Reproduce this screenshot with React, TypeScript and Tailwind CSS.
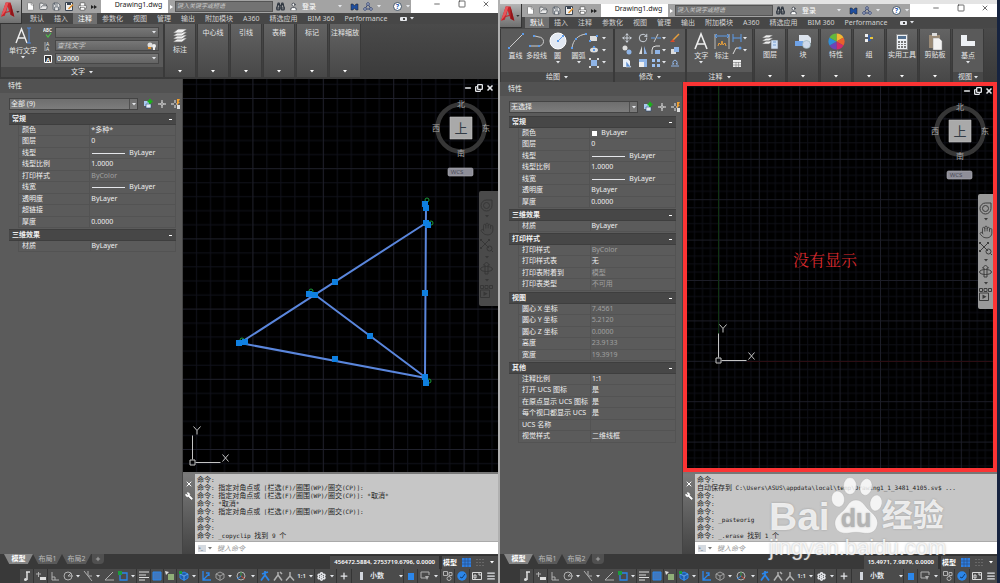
import { ReactNode } from 'react';
import {
  Binoculars,
  Calculator,
  Copy,
  File,
  FolderOpen,
  Hand,
  Menu,
  Minus,
  Move,
  Plus,
  Printer,
  RotateCw,
  Save,
  Settings,
  Square,
  User,
  Wrench,
  X,
} from 'lucide-react';

type Row = { label: string; value: string; muted?: boolean; line?: boolean; swatch?: boolean };
type Group = { title: string; rows: Row[] };

const leftGroups: Group[] = [
  {
    title: '常规',
    rows: [
      { label: '颜色', value: '*多种*' },
      { label: '图层', value: '0' },
      { label: '线型', value: 'ByLayer', line: true },
      { label: '线型比例', value: '1.0000' },
      { label: '打印样式', value: 'ByColor', muted: true },
      { label: '线宽', value: 'ByLayer', line: true },
      { label: '透明度', value: 'ByLayer' },
      { label: '超链接', value: '' },
      { label: '厚度', value: '0.0000' },
    ],
  },
  { title: '三维效果', rows: [{ label: '材质', value: 'ByLayer' }] },
];

const rightGroups: Group[] = [
  {
    title: '常规',
    rows: [
      { label: '颜色', value: 'ByLayer', swatch: true },
      { label: '图层', value: '0' },
      { label: '线型', value: 'ByLayer', line: true },
      { label: '线型比例', value: '1.0000' },
      { label: '线宽', value: 'ByLayer', line: true },
      { label: '透明度', value: 'ByLayer' },
      { label: '厚度', value: '0.0000' },
    ],
  },
  { title: '三维效果', rows: [{ label: '材质', value: 'ByLayer' }] },
  {
    title: '打印样式',
    rows: [
      { label: '打印样式', value: 'ByColor', muted: true },
      { label: '打印样式表', value: '无' },
      { label: '打印表附着到', value: '模型', muted: true },
      { label: '打印表类型', value: '不可用', muted: true },
    ],
  },
  {
    title: '视图',
    rows: [
      { label: '圆心 X 坐标', value: '7.4561', muted: true },
      { label: '圆心 Y 坐标', value: '5.2120', muted: true },
      { label: '圆心 Z 坐标', value: '0.0000', muted: true },
      { label: '高度', value: '23.9133', muted: true },
      { label: '宽度', value: '19.3919', muted: true },
    ],
  },
  {
    title: '其他',
    rows: [
      { label: '注释比例', value: '1:1' },
      { label: '打开 UCS 图标', value: '是' },
      { label: '在原点显示 UCS 图标', value: '是' },
      { label: '每个视口都显示 UCS', value: '是' },
      { label: 'UCS 名称', value: '' },
      { label: '视觉样式', value: '二维线框' },
    ],
  },
];

const leftLog = [
  '命令:',
  '命令: 指定对角点或 [栏选(F)/圈围(WP)/圈交(CP)]:',
  '命令: 指定对角点或 [栏选(F)/圈围(WP)/圈交(CP)]: *取消*',
  '命令: *取消*',
  '命令: 指定对角点或 [栏选(F)/圈围(WP)/圈交(CP)]:',
  '命令:',
  '命令:',
  '命令: _copyclip 找到 9 个',
];

const rightLog = [
  '命令:',
  '自动保存到 C:\\Users\\ASUS\\appdata\\local\\temp\\Drawing1_1_3481_4105.sv$ ...',
  '命令:',
  '命令:',
  '命令:',
  '命令: _pasteorig',
  '命令:',
  '命令: _.erase 找到 1 个',
];

const ribbonTabs = ['默认', '插入', '注释', '参数化', '视图', '管理', '输出', '附加模块', 'A360', '精选应用', 'BIM 360', 'Performance'];

function Caret({ className = 'text-gray-200' }: { className?: string }) {
  return (
    <svg viewBox="0 0 4 3" className={`h-[3px] w-1 shrink-0 ${className}`} aria-hidden="true">
      <path d="M0 0h4L2 2.6z" fill="currentColor" />
    </svg>
  );
}

/* ---------- title bar ---------- */

function Logo() {
  return (
    <button aria-label="应用程序菜单" className="flex w-[22px] shrink-0 items-center border-r border-b border-[#333] bg-linear-to-b from-[#b5b5b5] to-[#6f6f6f]">
      <svg viewBox="0 0 22 22" className="h-[22px] w-[22px]">
        <path d="M6 1h5l4 15-4-2-1-3-4 1-1 3-4 1z" fill="#c5262b" />
        <path d="M6 1h3l-3 9-5 6z" fill="#e8555a" />
        <path d="M8 5l1.500 5-3 .8z" fill="#8f8f8f" />
        <path d="M11 1l4 15-4-2z" fill="#8f1519" />
        <path d="M17 10h3.500L18.700 12z" fill="#333" />
      </svg>
    </button>
  );
}

function TitleBar({ activeTab, search }: { activeTab: string; search: string }) {
  return (
    <header className="flex h-6 shrink-0 bg-[#4a4a4a]">
      <Logo />
      <div className="flex min-w-0 flex-1 flex-col">
        <div className="flex h-[13px] items-stretch bg-[#a3a3a3]">
          <div className="flex w-[79px] shrink-0 items-center justify-between pr-1 pl-1 text-white">
            <button aria-label="新建"><File className="h-[9px] w-[9px] fill-white text-[#777]" /></button>
            <button aria-label="打开"><FolderOpen className="h-[9px] w-[9px] fill-[#e8e8e8] text-[#4d5358]" /></button>
            <button aria-label="保存"><Save className="h-[9px] w-[9px] fill-[#e8e8e8] text-[#3b4552]" /></button>
            <button aria-label="另存为">
              <svg viewBox="0 0 9 9" className="h-[9px] w-[9px]">
                <path d="M.5.500h7v8h-7z" fill="#eee" stroke="#3b4552" />
                <path d="M2 1h4v2H2z" fill="#3b4552" />
                <path d="M3.500 7L8 2.500" stroke="#e0902a" strokeWidth="1.500" />
              </svg>
            </button>
            <button aria-label="打印"><Printer className="h-[9px] w-[9px] fill-white text-[#555]" /></button>
            <button aria-label="更多">
              <svg viewBox="0 0 6 4" className="h-1 w-[6px]"><path d="M0 0l3 2-3 2zM3 0l3 2-3 2z" fill="#222" /></svg>
            </button>
          </div>
          <h1 className="flex w-[67px] shrink-0 items-start justify-center bg-white pl-2 text-[7px] leading-[9px] text-[#222]">Drawing1.dwg</h1>
          <button aria-label="展开搜索" className="flex w-[7px] shrink-0 items-center justify-center">
            <svg viewBox="0 0 3 4" className="h-1 w-[3px]"><path d="M0 0l3 2-3 2z" fill="#fff" /></svg>
          </button>
          <input
            id={search}
            aria-label="搜索"
            placeholder="键入关键字或短语"
            className="my-px w-[98px] min-w-0 border border-[#555] bg-[#737373] pl-px text-[6px] leading-[9px] text-white italic placeholder:text-[#c9c9c9]"
          />
          <div className="flex flex-1 items-center gap-1 pl-[3px] text-[#2f3640]">
            <Binoculars className="h-[9px] w-[9px]" strokeWidth={3} />
            <User className="h-[9px] w-[9px] fill-white" />
            <button className="text-[7px] leading-[9px] text-white">登录</button>
            <div className="flex-1" />
            <Caret />
            <svg viewBox="0 0 9 8" className="ml-1 h-2 w-[9px]"><path d="M1 1h2l1.500 2L6 1h2v6H6L4.500 5 3 7H1z" fill="#1f4e9e" stroke="#222" strokeWidth=".5" /></svg>
            <svg viewBox="0 0 10 9" className="h-[9px] w-[10px]" fill="#dbe4f5" stroke="#3b4a75">
              <path d="M5 2L2 7h6z" fill="none" />
              <circle cx="5" cy="2" r="1.300" /><circle cx="2" cy="7" r="1.300" /><circle cx="8" cy="7" r="1.300" />
            </svg>
            <Caret />
            <span className="ml-2 flex h-[9px] w-[9px] items-center justify-center rounded-full border border-[#456] bg-white text-[7px] leading-none font-bold text-[#2456b0]">?</span>
            <Caret className="mr-px text-gray-200" />
          </div>
          <div className="flex w-[87px] shrink-0 items-start justify-between bg-white pr-2 pl-[22px] text-[#222]">
            <button aria-label="最小化"><Minus className="h-2 w-2" /></button>
            <button aria-label="最大化"><Square className="h-2 w-2" /></button>
            <button aria-label="关闭"><X className="h-2 w-2" /></button>
          </div>
        </div>
        <nav className="flex h-[11px] items-stretch bg-[#474747] pl-[3px] text-[7px] leading-[11px] text-[#d2d2d2]">
          {ribbonTabs.map((tab) => (
            <button key={tab} className={`px-[5px] whitespace-nowrap ${tab === activeTab ? 'bg-[#707070] text-white' : ''}`}>
              {tab}
            </button>
          ))}
          <button aria-label="功能区选项" className="ml-2 flex items-center gap-[3px]">
            <span className="flex h-1 w-[7px] items-center justify-center rounded-[1px] bg-gray-200"><span className="h-[2px] w-[2px] bg-[#444]" /></span>
            <Caret />
          </button>
        </nav>
      </div>
    </header>
  );
}

/* ---------- ribbon ---------- */

function ClosedPanel({ label, icon }: { label: string; icon?: ReactNode }) {
  return (
    <button className="flex w-8 shrink-0 flex-col items-center border-x border-[#3a3a3a] bg-linear-to-b from-[#636363] to-[#474747] pt-1 pb-1 text-[7px] leading-[10px] text-[#e6e6e6]">
      {icon && <span className="flex h-[17px] items-center">{icon}</span>}
      <span className="whitespace-nowrap">{label}</span>
      <span className="flex-1" />
      <Caret className="text-white" />
    </button>
  );
}

function OpenPanel({ title, children, className }: { title: string; children: ReactNode; className: string }) {
  return (
    <section className={`flex shrink-0 flex-col border-x border-[#3a3a3a] bg-[#5a5a5a] ${className}`}>
      <div className="flex flex-1 px-1">{children}</div>
      <button className="flex h-[10px] items-center justify-center gap-1 bg-[#484848] text-[7px] leading-[10px] text-[#e6e6e6]">
        {title} <Caret />
      </button>
    </section>
  );
}

function BigTool({ label, icon, caret }: { label: string; icon: ReactNode; caret?: boolean }) {
  return (
    <button className="flex flex-1 flex-col items-center gap-px pt-[3px] text-[7px] leading-[9px] whitespace-nowrap text-[#e6e6e6]">
      <span className="flex h-[18px] items-center">{icon}</span>
      <span>{label}</span>
      {caret && <Caret />}
    </button>
  );
}

function LayersIcon() {
  return (
    <svg viewBox="0 0 16 17" className="h-[17px] w-4" fill="#f0f0f0" stroke="#666" strokeWidth=".7">
      <path d="M1 14l5-4h9l-5 4z" /><path d="M1 11l5-4h9l-5 4z" /><path d="M1 8l5-4h9l-5 4z" /><path d="M1 5l5-4h9l-5 4z" />
    </svg>
  );
}

function LeftRibbon() {
  const field = 'flex h-[11px] items-center border border-[#474747] bg-linear-to-b from-[#777] to-[#646464] pr-[2px]';
  return (
    <div className="flex h-[55px] shrink-0 bg-linear-to-b from-[#4a4a4a] to-[#3a3a3a] pb-[2px]">
      <OpenPanel title="文字" className="w-[164px]">
        <div className="flex w-9 shrink-0">
          <BigTool
            label="单行文字"
            caret
            icon={
              <svg viewBox="0 0 18 18" className="h-[18px] w-[18px]" fill="none">
                <path d="M2 16L7.500 2 13 16M4 11h7" stroke="#eee" strokeWidth="1.400" />
                <path d="M13 1h4M15 1v15M13 16h4" stroke="#4c86d8" />
              </svg>
            }
          />
        </div>
        <div className="flex w-[14px] shrink-0 flex-col items-center justify-around py-[2px]">
          <svg viewBox="0 0 10 10" className="h-[10px] w-[10px]">
            <text x="0" y="4" fontSize="4.500" fontWeight="700" fill="#eee">ABC</text>
            <path d="M3 6.500L5 9l3-4" stroke="#4fbf4a" strokeWidth="1.200" fill="none" />
          </svg>
          <svg viewBox="0 0 10 10" className="h-[10px] w-[10px]">
            <text x="3" y="5" fontSize="5" fill="#eee">A</text><text x="3" y="10" fontSize="5" fill="#eee">A</text>
            <path d="M2 1v9" stroke="#ddd" strokeWidth=".6" />
          </svg>
          <svg viewBox="0 0 10 10" className="h-[10px] w-[10px]">
            <path d="M1.500 1.500h7v7h-7z" fill="#333" stroke="#fff" />
            <text x="3" y="7.500" fontSize="6" fontWeight="700" fill="#fff">A</text>
          </svg>
        </div>
        <div className="flex flex-1 flex-col justify-around py-[2px] text-[7px]">
          <div className={field}>
            <select aria-label="文字样式" className="h-full flex-1 appearance-none bg-transparent text-white"><option></option></select>
            <Caret />
          </div>
          <div className={field}>
            <input aria-label="查找文字" placeholder="查找文字" className="w-full min-w-0 flex-1 bg-transparent pl-px text-[7px] leading-[9px] italic placeholder:text-[#c4c4c4]" />
            <svg viewBox="0 0 9 8" className="h-2 w-[9px]"><circle cx="3" cy="3" r="2.500" fill="#ddd" /><circle cx="7" cy="4" r="2" fill="#eee" /><path d="M1 5h3v2H1z" fill="#e0902a" /><path d="M6 5h2v3H6z" fill="#eee" /></svg>
          </div>
          <div className={field}>
            <select aria-label="文字高度" className="h-full flex-1 appearance-none bg-transparent pl-px text-[7px] leading-[9px] text-white"><option>0.2000</option></select>
            <Caret />
          </div>
        </div>
      </OpenPanel>
      <div className="flex gap-px">
        <ClosedPanel label="标注" icon={<LayersIcon />} />
        {['中心线', '引线', '表格', '标记', '注释缩放'].map((label) => (
          <ClosedPanel key={label} label={label} />
        ))}
      </div>
    </div>
  );
}

const blue = '#5d9be8';

function RightRibbon() {
  const mini = 'h-[10px] w-[10px]';
  return (
    <div className="flex h-[54px] shrink-0 bg-linear-to-b from-[#4a4a4a] to-[#3a3a3a] pt-px">
      <OpenPanel title="绘图" className="w-[114px]">
        <BigTool label="直线" icon={<svg viewBox="0 0 18 18" className="h-[18px] w-[18px]"><path d="M2 16L16 2" stroke="#ccc" /><path d="M1 15h2v2H1zM15 1h2v2h-2z" fill={blue} /></svg>} />
        <BigTool label="多段线" icon={<svg viewBox="0 0 18 18" className="h-[18px] w-[18px]"><path d="M2 14h9a4.500 4.500 0 000-9L7 4" stroke="#ccc" fill="none" /><path d="M1 13h2v2H1zM10 13h2v2h-2zM5 3h2v2H5z" fill={blue} /></svg>} />
        <BigTool label="圆" caret icon={<svg viewBox="0 0 18 18" className="h-[18px] w-[18px]"><circle cx="9" cy="9" r="8" fill="#e3e9f2" stroke="#fff" /><path d="M9 9l5-5" stroke={blue} /><path d="M8 8h2v2H8zM13 3h2v2h-2z" fill={blue} /></svg>} />
        <BigTool label="圆弧" caret icon={<svg viewBox="0 0 18 18" className="h-[18px] w-[18px]"><path d="M2 16C3 8 8 3 16 2" stroke="#ccc" fill="none" /><path d="M1 15h2v2H1zM5 6h2v2H5zM15 1h2v2h-2z" fill={blue} /></svg>} />
        <div className="grid w-5 shrink-0 grid-cols-2 place-items-center py-[3px]">
          <svg viewBox="0 0 10 10" className={mini}><path d="M1 3h7v5H1z" fill="#ddd" /><path d="M7 2h2v2H7zM0 7h2v2H0z" fill={blue} /></svg><Caret />
          <svg viewBox="0 0 10 10" className={mini}><ellipse cx="5" cy="5" rx="4" ry="2.500" fill="#ddd" /><path d="M4 1h2v2H4zM4 4h2v2H4z" fill={blue} /></svg><Caret />
          <svg viewBox="0 0 10 10" className={mini}><path d="M2 2h6v6H2z" fill="#8fb4e6" /><path d="M0 0h2v2H0zM8 0h2v2H8zM0 8h2v2H0zM8 8h2v2H8z" fill="#ddd" /></svg><Caret />
        </div>
      </OpenPanel>
      <OpenPanel title="修改" className="w-[72px]">
        <div className="grid flex-1 grid-cols-[16px_16px_10px_6px_16px] place-items-center py-[3px] text-[#dfe6ef]">
          <Move className={mini} />
          <RotateCw className={mini} />
          <svg viewBox="0 0 10 10" className={mini}><path d="M0 5h4M6 5h4" stroke={blue} /><path d="M3 9l4-8" stroke="#ccc" /></svg>
          <Caret />
          <svg viewBox="0 0 10 10" className={mini}><path d="M3 7l6-6" stroke="#e8a03c" strokeWidth="1.500" /><path d="M0 9h5L3 6z" fill="#d64b2a" /></svg>
          <svg viewBox="0 0 10 10" className={mini}><circle cx="3" cy="3" r="2.500" fill="#ddd" /><circle cx="7" cy="7" r="2.500" fill="#8fb4e6" /></svg>
          <svg viewBox="0 0 10 10" className={mini}><path d="M4 1v8H1z" fill="#ddd" /><path d="M6 1v8h3z" fill="#8fb4e6" /></svg>
          <svg viewBox="0 0 10 10" className={mini}><path d="M1 9V5a4 4 0 014-4h4" stroke="#ddd" fill="none" /><path d="M4 9V5h5v4z" fill="#8fb4e6" /></svg>
          <Caret />
          <svg viewBox="0 0 10 10" className={mini}><path d="M1 4h5v5H1z" fill="#ddd" /><path d="M4 2h5v5H4z" fill="#8fb4e6" /></svg>
          <svg viewBox="0 0 10 10" className={mini}><path d="M1 1h5l2 2v6H1z" fill="#e8eef7" /><path d="M4 3l5 6H4z" fill="#5d8ed0" stroke="#fff" strokeWidth=".5" /></svg>
          <svg viewBox="0 0 10 10" className={mini}><path d="M1 1h8v8H1z" fill="#8fb4e6" /><path d="M1 4h5v5H1z" fill="#eee" /></svg>
          <svg viewBox="0 0 10 10" className={mini}><path d="M1 1h3v3H1zM6 1h3v3H6zM1 6h3v3H1zM6 6h3v3H6z" fill="#9cc0f0" /></svg>
          <Caret />
          <svg viewBox="0 0 10 10" className={mini}><path d="M1 8h8M2 6h2a2 2 0 112 0h2" stroke="#8fb4e6" fill="none" /></svg>
        </div>
      </OpenPanel>
      <OpenPanel title="注释" className="w-[67px]">
        <BigTool label="文字" caret icon={<svg viewBox="0 0 18 18" className="h-[18px] w-[18px]"><path d="M3 17L9 2l6 15M5 12h8" stroke="#eee" strokeWidth="1.600" fill="none" /></svg>} />
        <BigTool label="标注" icon={<svg viewBox="0 0 18 18" className="h-[18px] w-[18px]"><path d="M2 2v15M16 2v15" stroke="#bbb" /><path d="M2 4h14M4 2L2 4l2 2M14 2l2 2-2 2" stroke={blue} fill="none" /><path d="M5 14l1-3 2 2 1-4 1 4 2-2 1 3" stroke="#e8a03c" fill="none" /></svg>} />
        <div className="grid w-4 shrink-0 grid-cols-[10px_6px] place-items-center py-[3px]">
          <svg viewBox="0 0 10 10" className={mini}><path d="M1 1v8M9 1v8M1 5h8" stroke={blue} /></svg><Caret />
          <svg viewBox="0 0 10 10" className={mini}><path d="M1 9l3-6h5" stroke="#ddd" fill="none" /><circle cx="8" cy="3" r="1.500" fill={blue} /></svg><Caret />
          <svg viewBox="0 0 10 10" className={mini}><path d="M1 2h8v7H1z" fill="#eee" /><path d="M1 4.500h8M1 7h8M4 4v5M6.500 4v5" stroke="#777" strokeWidth=".6" /></svg>
        </div>
      </OpenPanel>
      <div className="flex flex-1 gap-px pl-px">
        <ClosedPanel label="图层" icon={<svg viewBox="0 0 17 17" className="h-[17px] w-[17px]" stroke="#666" strokeWidth=".6"><path d="M0 11l4-3h7l-4 3zM0 8l4-3h7L7 8zM0 5l4-3h7L7 5z" fill="#eee" /><path d="M9 7h7v9H9z" fill="#cfe0f5" /><path d="M11 9h3M11 12h3" stroke="#3b6fb5" /></svg>} />
        <ClosedPanel label="块" icon={<svg viewBox="0 0 17 17" className="h-[17px] w-[17px]"><path d="M4 2h9l3 3v5H4z" fill="#dde4ee" /><path d="M0 8h8v5H0z" fill="#6fa3e8" /><circle cx="11.500" cy="11.500" r="4" fill="#cdd9ea" stroke="#8aa" strokeWidth=".5" /></svg>} />
        <ClosedPanel
          label="特性"
          icon={
            <svg viewBox="-9 -9 18 18" className="h-[17px] w-[17px]">
              <path d="M0 0V-8.500A8.500 8.500 0 017.400-4.200z" fill="#f2b632" />
              <path d="M0 0L7.400-4.200A8.500 8.500 0 017.400 4.200z" fill="#e8622c" />
              <path d="M0 0L7.400 4.200A8.500 8.500 0 010 8.500z" fill="#d42a6c" />
              <path d="M0 0V8.500A8.500 8.500 0 01-7.400 4.200z" fill="#6c44b8" />
              <path d="M0 0L-7.400 4.200A8.500 8.500 0 01-7.400-4.200z" fill="#2f8fd8" />
              <path d="M0 0L-7.400-4.200A8.500 8.500 0 010-8.500z" fill="#64b83c" />
            </svg>
          }
        />
        <ClosedPanel label="组" icon={<svg viewBox="0 0 8 8" className="mb-2 h-2 w-2"><path d="M0 0h3v3H0zM0 5h3v3H0z" fill="#eee" /><path d="M3 1h3v6H3z" fill="#3c5f9c" /><path d="M5 3h3v2H5z" fill="#e8c63c" /></svg>} />
        <ClosedPanel
          label="实用工具"
          icon={
            <svg viewBox="0 0 12 16" className="h-4 w-3">
              <path d="M.5.500h11v15H.5z" fill="#eceff3" stroke="#888" />
              <path d="M2 2h8v3H2z" fill="#54708f" />
              <path d="M2 7h2v2H2zM5 7h2v2H5zM8 7h2v2H8zM2 10h2v1H2zM5 10h2v1H5zM8 10h2v1H8zM2 12h2v2H2zM5 12h2v2H5zM8 12h2v2H8z" fill="#777" />
            </svg>
          }
        />
        <ClosedPanel label="剪贴板" icon={<svg viewBox="0 0 16 17" className="h-[17px] w-4"><path d="M2 2h11v13H2z" fill="#9a8a76" /><path d="M5 0h5v3H5z" fill="#ddd" /><path d="M6 5h6l3 3v9H6z" fill="#f2f2f2" stroke="#888" strokeWidth=".5" /></svg>} />
        <section className="flex w-8 shrink-0 flex-col border-x border-[#3a3a3a] bg-[#5a5a5a]">
          <div className="flex flex-1">
            <BigTool label="基点" caret icon={<svg viewBox="0 0 14 12" className="h-3 w-[14px]"><path d="M0 0h6v6h8v5H0z" fill="#eef1f5" /></svg>} />
          </div>
          <button className="flex h-[10px] items-center justify-center gap-[2px] bg-[#484848] text-[7px] leading-[10px] text-[#e6e6e6]">视图 <Caret /></button>
        </section>
      </div>
    </div>
  );
}

/* ---------- properties palette ---------- */

function Palette({ selection, groups }: { selection: string; groups: Group[] }) {
  return (
    <aside className="w-[183px] shrink-0 border-r border-[#444] bg-[#5b5b5b] text-[7px] text-[#efefef]">
      <h2 className="h-[14px] bg-[#525252] pl-2 leading-[14px]">特性</h2>
      <div className="flex items-center gap-1 pt-[5px] pr-1 pb-[3px] pl-[9px]">
        <div className="mr-px flex h-3 w-[129px] shrink-0 items-center border border-[#444] bg-linear-to-b from-[#6e6e6e] to-[#7c7c7c]">
          <select aria-label="选择对象" className="h-full flex-1 appearance-none bg-transparent pl-px text-[7px] leading-[10px]"><option>{selection}</option></select>
          <span className="flex h-full w-2 items-center justify-center border-l border-[#505050]"><Caret /></span>
        </div>
        <button aria-label="切换 PICKADD"><svg viewBox="0 0 10 10" className="h-[10px] w-[10px]"><path d="M1 2h5v5H1z" fill="#a8c8f0" /><path d="M3 5h5v4H3z" fill="#e6edf7" stroke="#2a4a7a" strokeWidth=".6" /><path d="M7 0v5M4.500 2.500h5" stroke="#19b319" strokeWidth="1.800" /></svg></button>
        <button aria-label="选择对象"><svg viewBox="0 0 10 10" className="h-[10px] w-[10px]"><path d="M5 1v3M5 6v3M1 5h3M6 5h3" stroke="#e8e8e8" /><path d="M4 4h2v2H4z" fill="none" stroke="#e8e8e8" strokeWidth=".6" /></svg></button>
        <button aria-label="快速选择"><svg viewBox="0 0 10 10" className="h-[10px] w-[10px]"><path d="M4 1v3M4 6v3M0 5h3M5 5h2" stroke="#e8e8e8" /><path d="M6 0h3L7.500 3H9L6 6z" fill="#f0a030" /><path d="M6 6h3v4H6z" fill="#ddd" /></svg></button>
      </div>
      {groups.map((group) => (
        <section key={group.title} className="mr-[6px] mb-px ml-[9px]">
          <button className="flex h-3 w-full items-center justify-between border-y border-[#3e3e3e] bg-[#474747] pr-1 pl-[3px] leading-[10px] font-bold">
            {group.title}
            <span className="h-px w-[3px] bg-white" />
          </button>
          <table className="ml-[9px] table-fixed border-separate border-spacing-0 border-l border-[#535353]">
            <tbody>
              {group.rows.map((row) => (
                <tr key={row.label} className="odd:h-[11px] even:h-3">
                  <th scope="row" className="w-[72px] border-r border-b border-[#535353] p-0 pl-[3px] text-left align-top leading-[9px] font-normal whitespace-nowrap">{row.label}</th>
                  <td className={`w-[86px] border-r border-b border-[#535353] p-0 pl-px align-top leading-[10px] ${row.muted ? 'text-[#a0a0a0]' : ''}`}>
                    <span className="flex items-center gap-1">
                      {row.line && <span className="ml-px h-px w-[33px] bg-gray-200" />}
                      {row.swatch && <span className="ml-px h-[5px] w-[5px] bg-white" />}
                      {row.value}
                    </span>
                  </td>
                </tr>
              ))}
            </tbody>
          </table>
        </section>
      ))}
    </aside>
  );
}

/* ---------- drawing area ---------- */

function UcsIcon({ x, y }: { x: number; y: number }) {
  return (
    <g transform={`translate(${x} ${y})`} stroke="#c4c4c4" fill="none">
      <path d="M-2.500-2.500h5v5h-5zM0-3v-24M3 0h25" />
      <path d="M1-36l3.500 4v4M8-36l-3.500 4M30-8l6 7M36-8l-6 7" />
    </g>
  );
}

function ViewCube() {
  return (
    <svg viewBox="0 0 62 82" className="absolute top-[18px] right-[6px] h-[82px] w-[62px]" fontSize="8" textAnchor="middle">
      <circle cx="31" cy="31" r="23.500" fill="none" stroke="#363636" strokeWidth="4.500" />
      <g fill="#a8a8a8">
        <text x="31" y="10">北</text><text x="31" y="59">南</text><text x="6" y="34">西</text><text x="56" y="34">东</text>
      </g>
      <path d="M20 20h22v22H20z" fill="#a9a9a9" stroke="#c4c4c4" strokeWidth=".6" />
      <text x="31" y="36" fontSize="13" fill="#333b45">上</text>
      <rect x="18" y="71" width="25" height="8" rx="1.500" fill="#8e8e98" stroke="#b5b5bd" strokeWidth=".6" />
      <text x="27" y="77" fontSize="6" fill="#4c4c58">WCS</text>
    </svg>
  );
}

function NavBar({ dim }: { dim?: boolean }) {
  return (
    <div className={`absolute top-[112px] right-0 flex h-[115px] w-[19px] flex-col items-center justify-between rounded-l-[2px] py-2 pr-1 ${dim ? 'bg-[#4a4a4a] text-[#373737]' : 'bg-[#9a9a9a] text-[#3c3c3c]'}`}>
      <button aria-label="导航控制盘"><svg viewBox="0 0 13 13" className="h-[13px] w-[13px]" fill="none" stroke="currentColor"><path d="M6.500 1H12v5.500a5.500 5.500 0 11-5.500-5.500z" /><circle cx="6.500" cy="6.500" r="3" /></svg></button>
      <Caret className="text-current" />
      <button aria-label="平移"><Hand className="h-[14px] w-[14px]" strokeWidth={1.5} /></button>
      <button aria-label="缩放"><svg viewBox="0 0 14 14" className="h-[14px] w-[14px]" fill="none" stroke="currentColor"><path d="M1 1l8 8M9 1L1 9M11.500 11.500L13 13" /><path d="M0 0h2v2H0zM8 0h2v2H8zM0 8h2v2H0z" fill="currentColor" stroke="none" /><circle cx="9.500" cy="9.500" r="2.500" /></svg></button>
      <Caret className="text-current" />
      <button aria-label="动态观察"><svg viewBox="0 0 13 13" className="h-[13px] w-[13px]" fill="none" stroke="currentColor"><ellipse cx="6.500" cy="7" rx="6" ry="2.500" /><path d="M5 12V3H3.500l3-3 3 3H8v9z" /></svg></button>
      <Caret className="text-current" />
      <button aria-label="ShowMotion"><svg viewBox="0 0 13 13" className="h-[13px] w-[13px]" fill="none" stroke="currentColor"><path d="M.5.500h3v3h-3zM5 .5h3v3H5zM9.500.500h3v3h-3zM.5 5h9v7.500h-9z" /><path d="M3.500 6.500v4.500l4-2.200z" fill="currentColor" stroke="none" /></svg></button>
    </div>
  );
}

function ViewportControls() {
  return (
    <div className="absolute top-[5px] right-1 flex items-center gap-[3px] text-gray-200">
      <button aria-label="最小化视口"><Minus className="h-2 w-2" strokeWidth={5} /></button>
      <button aria-label="还原视口"><Copy className="h-2 w-2 -scale-y-100" strokeWidth={4} /></button>
      <button aria-label="关闭视口"><X className="h-2 w-2" strokeWidth={5} /></button>
    </div>
  );
}

const grips = [
  [242, 125], [243, 129], [243, 144], [245, 146], [242, 214], [152, 203], [126, 215], [132, 216],
  [56, 264], [62, 263], [152, 280], [187, 257], [242, 298], [243, 304],
];
const marks = [[244, 121], [248, 144], [128, 212], [59, 261], [246, 302]];

function LeftCanvas() {
  return (
    <div className="relative flex-1 overflow-hidden bg-black">
      <svg className="absolute inset-0 h-full w-full">
        <defs>
          <pattern id="grid-a" width="70.400" height="70.200" patternUnits="userSpaceOnUse" patternTransform="translate(-1 19)">
            <path d="M14.500 0v70M28.500 0v70M42.500 0v70M56.500 0v70M0 14.500h70M0 28.500h70M0 42.500h70M0 56.500h70" stroke="#10111a" />
            <path d="M.5 0v71M0 .5h71" stroke="#20212c" />
          </pattern>
        </defs>
        <rect width="100%" height="100%" fill="url(#grid-a)" />
        <path d="M243 144L57 264l186 35M243 125L242 298M131 215l111 83" fill="none" stroke="#5a86dc" strokeWidth="2" />
        {marks.map(([x, y]) => (
          <circle key={`${x}-${y}`} cx={x} cy={y} r="2" fill="none" stroke="#1c9c3c" />
        ))}
        {grips.map(([x, y]) => (
          <rect key={`${x}-${y}`} x={x - 3} y={y - 3} width="6" height="6" fill="#0f7fe0" />
        ))}
        <UcsIcon x={9.5} y={383.5} />
      </svg>
      <ViewCube />
      <NavBar dim />
      <ViewportControls />
    </div>
  );
}

function RightCanvas() {
  return (
    <div className="relative flex-1 overflow-hidden bg-black">
      <svg className="absolute inset-0 h-full w-full">
        <defs>
          <pattern id="grid-b" width="40.400" height="40.400" patternUnits="userSpaceOnUse" patternTransform="translate(-5 -4)">
            <path d="M8.500 0v41M16.500 0v41M24.500 0v41M32.500 0v41M0 8.500h41M0 16.500h41M0 24.500h41M0 32.500h41" stroke="#0d0e15" />
            <path d="M.5 0v41M0 .5h41" stroke="#1c1d27" />
          </pattern>
        </defs>
        <rect width="100%" height="100%" fill="url(#grid-b)" />
        <path d="M35.500 0v252" stroke="#0f3312" />
        <path d="M64 279.500h400" stroke="#2c0d12" />
        <UcsIcon x={35.5} y={278.5} />
      </svg>
      <p className="absolute top-[168px] left-[110px] font-['Noto_Serif_CJK_SC','Noto_Sans_CJK_SC',serif] text-[16px] leading-5 text-[#d8282c]">没有显示</p>
      <ViewCube />
      <NavBar />
      <ViewportControls />
      <div className="pointer-events-none absolute inset-0 border-4 border-[#fb3434]" />
    </div>
  );
}

/* ---------- command line ---------- */

// ideographs are drawn one size up from the latin text
function LogLine({ text }: { text: string }) {
  return (
    <p className="h-2 leading-2 whitespace-pre">
      {text.split(/([\u4e00-\u9fff]+)/).map((part, i) => (i % 2 ? <span key={i} className="text-[7px]">{part}</span> : part))}
    </p>
  );
}

function CommandLine({ log }: { log: string[] }) {
  return (
    <div className="flex border-t-2 border-[#777]">
      <div className="flex w-3 shrink-0 flex-col items-center gap-1 bg-linear-to-b from-[#7b7b7b] to-[#444] pt-[6px] text-white">
        <button aria-label="关闭命令行"><X className="h-2 w-2" strokeWidth={3} /></button>
        <button aria-label="自定义"><Wrench className="h-2 w-2 -scale-x-100 fill-white" /></button>
      </div>
      <div className="min-w-0 flex-1">
        <div className="bg-[#c6c6c6] pt-[2px] pb-px pl-[2px] font-['DejaVu_Sans_Mono','Noto_Sans_CJK_SC',monospace] text-[6px] text-[#222]">
          {log.map((text, i) => (
            <LogLine key={i} text={text} />
          ))}
        </div>
        <label className="flex h-[13px] items-center gap-[2px] border-t border-[#aaa] bg-white pl-[3px]">
          <span className="flex h-[7px] w-2 items-center bg-[#d5dae0] text-[5px] leading-none text-[#345]">&gt;_</span>
          <Caret className="text-[#777]" />
          <input aria-label="命令" placeholder="键入命令" className="min-w-0 flex-1 pl-[3px] text-[7px] leading-[9px] italic placeholder:text-[#999]" />
        </label>
      </div>
    </div>
  );
}

/* ---------- bottom bars ---------- */

function LayoutBar({ coords }: { coords: string }) {
  const tab = '[clip-path:polygon(0_0,100%_0,82%_100%,18%_100%)] h-[10px] w-[29px] leading-[10px]';
  return (
    <div className="flex h-[15px] shrink-0 items-start bg-[#393939] pl-1 text-[7px] text-[#bbb]">
      <button className={`${tab} bg-[#858585] font-bold text-white`}>模型</button>
      <button className={`${tab} bg-[#5a5a5a]`}>布局1</button>
      <button className={`${tab} bg-[#5a5a5a]`}>布局2</button>
      <button aria-label="新建布局" className="ml-px flex h-[10px] w-3 items-center justify-center rounded-b bg-[#505050]"><Plus className="h-[6px] w-[6px]" strokeWidth={3} /></button>
      <div className="flex-1" />
      <div className="mt-px flex h-[14px] items-center gap-[3px] bg-[#333] leading-[13px] text-white">
        <output className="flex h-[13px] items-center bg-[#4b4b4b] px-1 text-[6px] font-semibold">{coords}</output>
        <div className="flex h-[13px] items-center gap-[5px] bg-[#4b4b4b] pr-1 pl-px">
          <button className="text-[7px] font-semibold">模型</button>
          <svg viewBox="0 0 9 9" className="h-[9px] w-[9px]"><path d="M0 0h9v9H0z" fill="#2f7fe0" /><path d="M3 0v9M6 0v9M0 3h9M0 6h9" stroke="#2a4f85" strokeWidth=".7" /></svg>
          <svg viewBox="0 0 9 9" className="h-[9px] w-[9px]"><path d="M1 1v8M4 1v8M7 1v8" stroke="#858585" strokeDasharray="1 2" /></svg>
          <Caret className="text-white" />
        </div>
      </div>
    </div>
  );
}

const on = '#2b86ea';
const off = '#b0b0b0';

const statusTools: { name: string; width: string; icon: ReactNode; caret?: boolean; divider?: boolean }[] = [
  { name: '推断约束', width: 'w-[14px]', icon: <><path d="M4 1h4M5 1v8" stroke="#ddd" strokeWidth="1.500" /><circle cx="3.500" cy="8.500" r="1.500" fill="#ddd" /></>, divider: true },
  { name: '动态输入', width: 'w-[14px]', icon: <><path d="M0 3h5M2.500 1v5" stroke={off} /><path d="M4 6h6v3H4z" fill="#ddd" /></>, divider: true },
  { name: '正交', width: 'w-[13px]', icon: <path d="M2 1v8h7M2 6h3v3" stroke={off} fill="none" /> },
  { name: '极轴', width: 'w-[20px]', icon: <><circle cx="5" cy="5" r="4" stroke={off} fill="none" /><path d="M5 5h5M5 5l3-3" stroke={off} /></>, caret: true },
  { name: '等轴测', width: 'w-[21px]', icon: <path d="M1 0l8 10M5 0v4M9 5H5" stroke={off} fill="none" />, caret: true },
  { name: '对象捕捉追踪', width: 'w-[14px]', icon: <path d="M9 1L1 9h9" stroke={off} fill="none" /> },
  { name: '对象捕捉', width: 'w-[21px]', icon: <><path d="M2 2h7v7H2z" stroke={on} strokeWidth="1.300" fill="none" /><path d="M0 0h4v4H0z" fill="#1c9c3c" /></>, caret: true, divider: true },
  { name: '线宽', width: 'w-[14px]', icon: <path d="M0 1h10M0 4h7M0 6.500h10M0 9h6" stroke="#ddd" />, divider: true },
  { name: '透明度', width: 'w-[13px]', icon: <path d="M1 1h8v8H1z" fill="#3f78c0" stroke={on} />, divider: true },
  { name: '选择循环', width: 'w-[13px]', icon: <><path d="M3 3h6v6H3z" fill="#8fae78" /><path d="M0 0l4 1-3 3z" fill="#ddd" /></>, divider: true },
  { name: '三维对象捕捉', width: 'w-[22px]', icon: <><path d="M5 1l4 2v4L5 9.500 1 7V3z" fill="#1f5fb0" stroke={on} /><path d="M5 5v4M5 5l4-2M5 5L1 3" stroke="#9cf" strokeWidth=".6" /><path d="M0 0h3v3H0z" fill="#1c9c3c" /></>, caret: true, divider: true },
  { name: '动态 UCS', width: 'w-[14px]', icon: <path d="M2 0v9h8M2 9l6-6M5 2h3v3" stroke={on} strokeWidth="1.300" fill="none" /> },
  { name: '选择过滤', width: 'w-[21px]', icon: <path d="M5 1l4 2v4L5 9.500 1 7V3zM5 5v4M5 5l4-2M5 5L1 3" stroke={off} strokeWidth=".8" fill="none" />, caret: true },
  { name: '小控件', width: 'w-[24px]', icon: <><circle cx="5" cy="5" r="4" stroke={off} fill="none" /><path d="M5 5V1" stroke="#3d9c4c" /><path d="M5 5l4 3" stroke="#c64b3a" /><path d="M5 5L1 8" stroke={on} /></>, caret: true, divider: true },
  { name: '注释可见性', width: 'w-[13px]', icon: <path d="M5 0v4L1 9.500M5 4l4 5.500M2 3l6-2" stroke={on} strokeWidth="1.800" fill="none" /> },
  { name: '自动缩放', width: 'w-[13px]', icon: <path d="M5 1v3L1 9.500M5 4l4 5.500M7 1l2 2" stroke={off} strokeWidth="1.500" fill="none" /> },
  { name: '注释', width: 'w-[12px]', icon: <path d="M5 1v4L1 9.500M5 5l4 4.500" stroke={off} strokeWidth="1.500" fill="none" /> },
];

function StatusBar() {
  const cell = 'flex shrink-0 items-center justify-around';
  return (
    <footer className="flex h-[14px] shrink-0 bg-[#393939] pl-5 text-[7px] text-gray-200">
      <div className="flex min-w-0 flex-1 bg-[#4b4b4b] [&>*+*]:border-[#343434]">
        {statusTools.map((tool) => (
          <button key={tool.name} aria-label={tool.name} className={`${cell} ${tool.width} ${tool.divider ? 'border-r border-[#343434]' : ''}`}>
            <svg viewBox="0 0 10 10" className="h-[10px] w-[10px]">{tool.icon}</svg>
            {tool.caret && <Caret />}
          </button>
        ))}
        <button className={`${cell} w-[19px] border-r text-[6px] font-semibold`}>1:1 <Caret /></button>
        <button aria-label="切换工作空间" className={`${cell} w-[22px] border-r`}><Settings className="h-[9px] w-[9px]" strokeWidth={4} /><Caret /></button>
        <button aria-label="注释监视器" className={`${cell} w-[15px] border-r`}><Plus className="h-[10px] w-[10px]" strokeWidth={3} /></button>
        <label className="flex w-[52px] shrink-0 items-center gap-1 border-r pl-2">
          <span className="h-2 w-[3px] bg-gray-300" />
          <select aria-label="单位" className="min-w-0 flex-1 appearance-none pl-[3px] text-[7px] leading-[10px] font-bold"><option>小数</option></select>
          <Caret />
        </label>
        <button aria-label="快捷特性" className={`${cell} w-[14px] border-r`}><span className="h-[7px] w-[6px] bg-[#2b86ea]" /></button>
        <button aria-label="锁定用户界面" className={`${cell} w-[23px] border-r`}>
          <svg viewBox="0 0 10 10" className="h-[10px] w-[10px]"><path d="M6 7H1V1h8v3" stroke={off} fill="none" /><path d="M5 5h4L7 9z" fill={off} /></svg><Caret />
        </button>
        <button aria-label="隔离对象" className={`${cell} w-[14px] border-r`}><svg viewBox="0 0 10 10" className="h-[10px] w-[10px]" stroke={off} fill="none"><path d="M.5.500h4v4h-4zM6 1.500h3v3H6z" /><circle cx="6" cy="7.500" r="2" /></svg></button>
        <button aria-label="硬件加速" className={`${cell} w-[15px] border-r`}><svg viewBox="0 0 10 10" className="h-[10px] w-[10px]"><circle cx="5" cy="5" r="4.700" fill={on} /><path d="M3 6l2 1 3-4" stroke="#123d70" fill="none" /></svg></button>
        <button aria-label="全屏显示" className={`${cell} w-[14px]`}><svg viewBox="0 0 10 10" className="h-[10px] w-[10px]" stroke="#ddd" fill="none"><path d="M.5 1.500h9v7h-9z" /><path d="M2 4h2v3H2zM6 3h2v2" /></svg></button>
        <button aria-label="自定义" className={`${cell} w-[13px]`}><Menu className="h-[10px] w-[10px]" strokeWidth={3} /></button>
      </div>
    </footer>
  );
}

function Watermark() {
  return (
    <div className="pointer-events-none absolute right-[50px] bottom-[23px] flex w-[178px] flex-col font-['Liberation_Sans','Noto_Sans_CJK_SC',sans-serif] whitespace-nowrap text-white/80 [text-shadow:0_0_2px_rgba(120,120,120,0.6)]">
      <div className="flex h-[60px] items-end">
        <span className="text-[39px] leading-[36px] font-bold">Bai</span>
        <svg viewBox="0 0 52 58" className="h-[58px] w-[52px] shrink-0" fill="#fff" fillOpacity=".8" stroke="#999" strokeOpacity=".4" strokeWidth=".7">
          <ellipse cx="8" cy="22" rx="6.500" ry="8" transform="rotate(-10 8 22)" />
          <ellipse cx="20" cy="9" rx="6.500" ry="8.500" />
          <ellipse cx="36" cy="10" rx="6" ry="8.500" transform="rotate(12 36 10)" />
          <ellipse cx="46" cy="26" rx="6" ry="8" transform="rotate(10 46 26)" />
          <path d="M26 23c7 0 9 7 14 11 6 5 9 10 7 15-2 7-8 8-14 7-5-1-9-1-14 0-7 1-13-1-14-8-1-6 3-10 8-14 5-5 6-11 13-11z" />
          <text x="26" y="50" fontSize="25" fontWeight="700" textAnchor="middle" fill="#b4b4b4" fillOpacity="1" stroke="none">du</text>
        </svg>
        <span className="text-[31px] leading-[38px] font-bold">经验</span>
      </div>
      <span className="text-[22px] leading-[25px]">jingyan.baidu.com</span>
    </div>
  );
}

export default function App() {
  return (
    <div className="grid min-h-screen grid-cols-2 bg-[#e4e4e4] font-['Noto_Sans','Noto_Sans_CJK_SC',sans-serif]">
      <main className="flex min-w-0 flex-col overflow-hidden border-r-2 border-[#b0b0b0] bg-[#3a3a3a]">
        <TitleBar activeTab="注释" search="search-a" />
        <LeftRibbon />
        <div className="flex flex-1">
          <Palette selection="全部 (9)" groups={leftGroups} />
          <div className="flex min-w-0 flex-1 flex-col">
            <LeftCanvas />
            <CommandLine log={leftLog} />
          </div>
        </div>
        <LayoutBar coords="456472.5884, 2753719.6796, 0.0000" />
        <StatusBar />
      </main>
      <main className="relative flex min-w-0 flex-col overflow-hidden border-r-3 border-[#16233f] pt-1">
        <TitleBar activeTab="默认" search="search-b" />
        <RightRibbon />
        <div className="flex flex-1">
          <Palette selection="无选择" groups={rightGroups} />
          <div className="flex min-w-0 flex-1 flex-col">
            <RightCanvas />
            <CommandLine log={rightLog} />
          </div>
        </div>
        <LayoutBar coords="15.4971, 7.9879, 0.0000" />
        <StatusBar />
        <Watermark />
      </main>
    </div>
  );
}
